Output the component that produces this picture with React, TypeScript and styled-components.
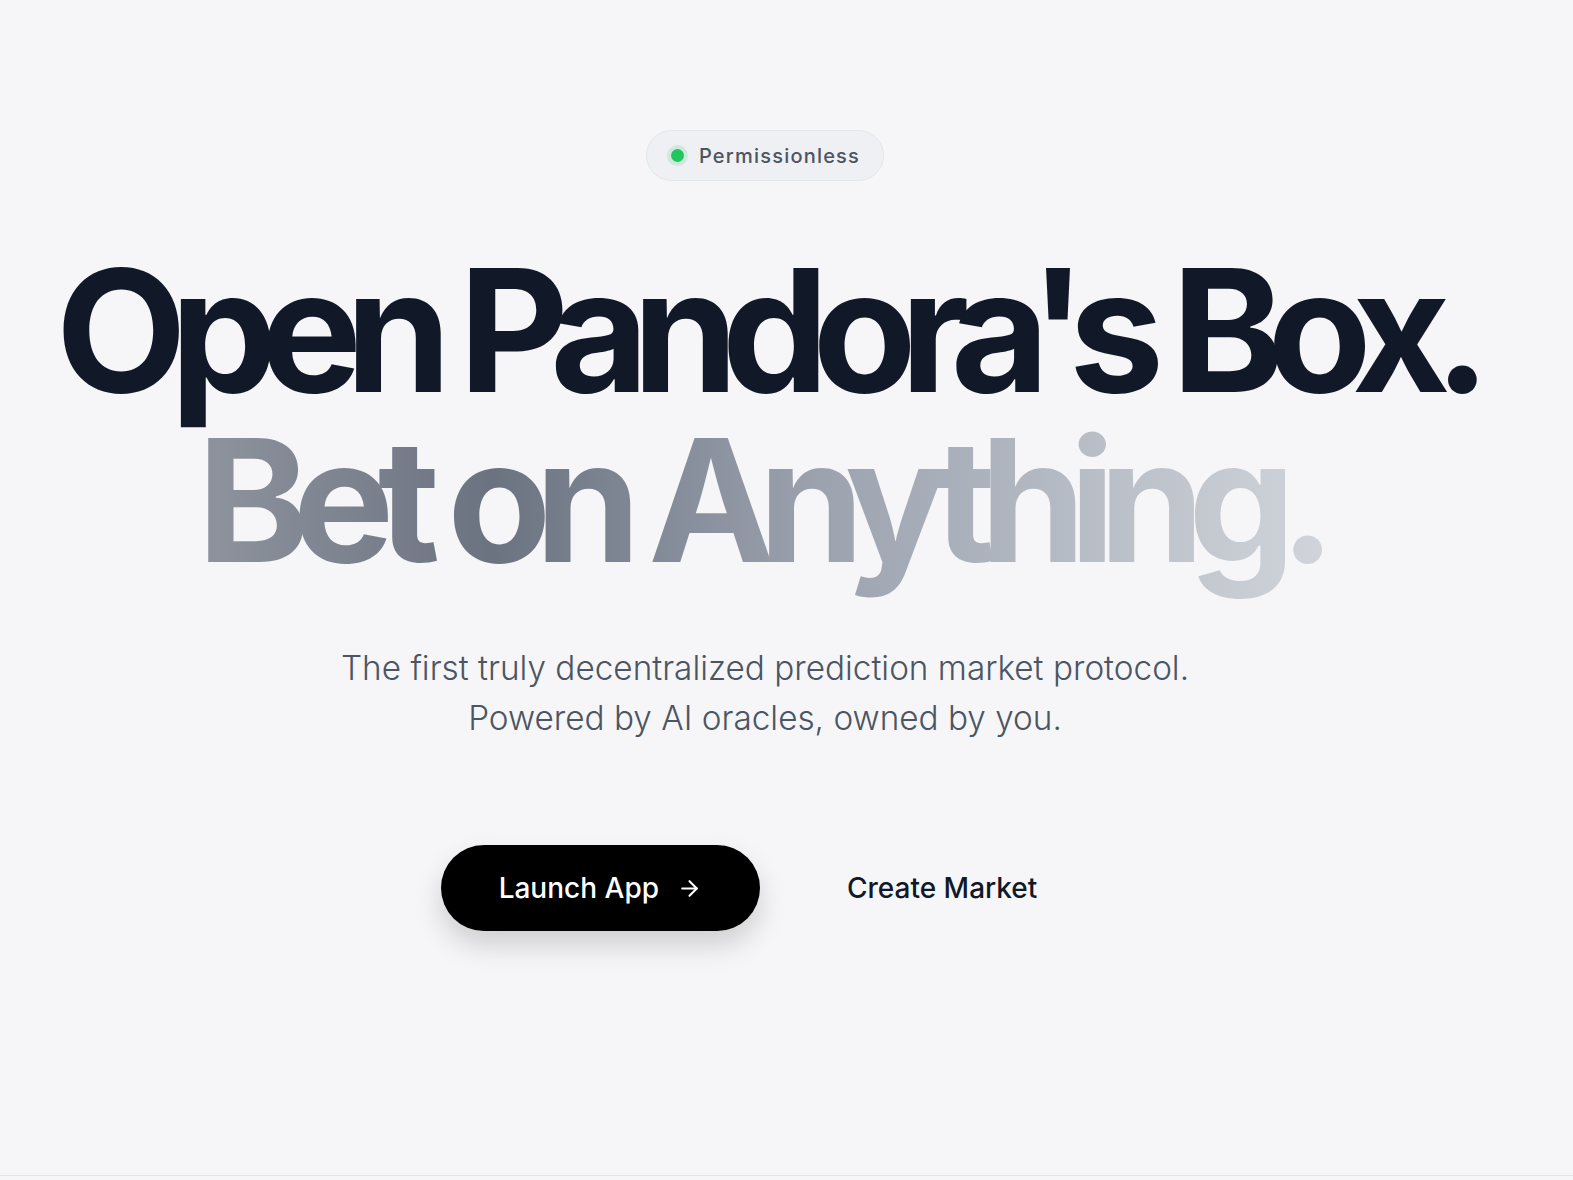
import React from 'react'
import styled, {createGlobalStyle} from 'styled-components'
import {ArrowRight} from 'lucide-react'

const GlobalStyle = createGlobalStyle`
  html, body {
    margin: 0;
    padding: 0;
    background: #f6f6f8;
    font-family: Inter, "Noto Sans", sans-serif;
    -webkit-font-smoothing: antialiased;
  }
`

const App: React.FC = () => {
  return (
    <>
      <GlobalStyle />
      <Hero>
        <Badge>
          <Dot />
          Permissionless
        </Badge>
        <Title>
          <TitleLine>Open Pandora's Box.</TitleLine>
          <GradientLine>Bet on Anything.</GradientLine>
        </Title>
        <Lead>
          The first truly decentralized prediction market protocol.
          <br />
          Powered by AI oracles, owned by you.
        </Lead>
        <Actions>
          <PrimaryButton>
            Launch App
            <ArrowRight size={25} strokeWidth={2} />
          </PrimaryButton>
          <GhostButton>Create Market</GhostButton>
        </Actions>
      </Hero>
    </>
  )
}

const Hero = styled.section`
  height: 1176px;
  box-sizing: border-box;
  border-bottom: 1px solid #e3e4e8;
  display: flex;
  flex-direction: column;
  align-items: center;
  padding: 130px 43px 0 0;
`

const Badge = styled.div`
  display: flex;
  align-items: center;
  gap: 15px;
  height: 51px;
  box-sizing: border-box;
  padding: 0 23px 0 24px;
  border-radius: 999px;
  background: #eff0f3;
  border: 1px solid #e4e6ea;
  color: #4b5563;
  font-size: 20px;
  font-weight: 500;
  letter-spacing: 0.06em;
`

const Dot = styled.span`
  width: 13px;
  height: 13px;
  border-radius: 50%;
  background: #22c55e;
  box-shadow: 0 0 0 4px rgba(34, 197, 94, 0.15);
`

const Title = styled.h1`
  margin: 64px 0 0;
  font-size: 170px;
  line-height: 1;
  font-weight: 700;
  letter-spacing: -0.097em;
  white-space: nowrap;
  text-align: center;
  color: #111827;
`

const TitleLine = styled.span`
  display: block;
`

const GradientLine = styled.span`
  display: inline-block;
  background: linear-gradient(
    to right,
    #8f949e 0%,
    #6b7280 26%,
    #9ca3af 55%,
    #d1d5db 100%
  );
  -webkit-background-clip: text;
  background-clip: text;
  color: transparent;
  padding: 0 0.08em 0.1em 0;
  margin-bottom: -0.1em;
`

const Lead = styled.p`
  margin: 58px 0 0;
  font-size: 33.3px;
  line-height: 50px;
  font-weight: 300;
  color: #4b5563;
  text-align: center;
`

const Actions = styled.div`
  display: flex;
  align-items: center;
  gap: 47px;
  margin-top: 102px;
  margin-left: -12px;
`

const PrimaryButton = styled.button`
  display: flex;
  align-items: center;
  gap: 18px;
  height: 86px;
  padding: 0 58px;
  border: none;
  border-radius: 999px;
  background: #000;
  color: #fff;
  font-family: inherit;
  font-size: 28px;
  font-weight: 500;
  box-shadow: 0 14px 28px rgba(0, 0, 0, 0.16);
  cursor: pointer;
`

const GhostButton = styled.button`
  height: 86px;
  padding: 0 40px;
  border: none;
  background: transparent;
  color: #111827;
  font-family: inherit;
  font-size: 28px;
  font-weight: 500;
  cursor: pointer;
`

export default App
